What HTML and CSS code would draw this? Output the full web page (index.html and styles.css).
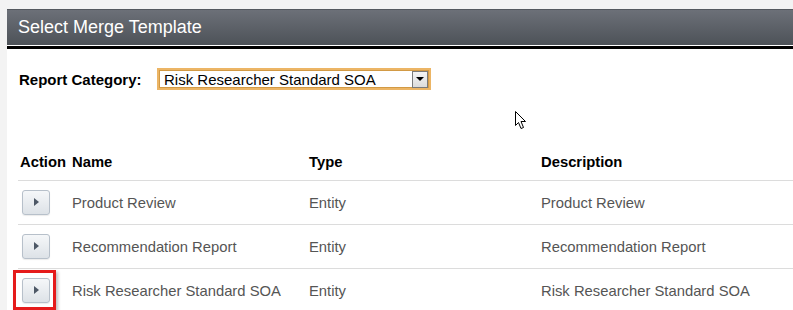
FILE: index.html
```html
<!DOCTYPE html>
<html lang="en">

<head>
    <meta charset="UTF-8">
    <title>Select Merge Template</title>
    <link rel="stylesheet" href="styles.css">
</head>

<body>
    <div class="panel">
        <div class="panel-header">Select Merge Template</div>
        <div class="panel-body">
            <div class="filter-row">
                <label class="filter-label">Report Category:</label>
                <div class="fake-select">
                    <span class="fake-select-text">Risk Researcher Standard SOA</span>
                    <span class="fake-select-btn"><span class="arrow-down"></span></span>
                </div>
            </div>

            <table class="template-table">
                <thead>
                    <tr>
                        <th class="col-action">Action</th>
                        <th class="col-name">Name</th>
                        <th class="col-type">Type</th>
                        <th>Description</th>
                    </tr>
                </thead>
                <tbody>
                    <tr>
                        <td class="col-action"><button class="play-btn"><span class="arrow-right"></span></button></td>
                        <td>Product Review</td>
                        <td>Entity</td>
                        <td>Product Review</td>
                    </tr>
                    <tr>
                        <td class="col-action"><button class="play-btn"><span class="arrow-right"></span></button></td>
                        <td>Recommendation Report</td>
                        <td>Entity</td>
                        <td>Recommendation Report</td>
                    </tr>
                    <tr>
                        <td class="col-action highlight-cell">
                            <button class="play-btn"><span class="arrow-right"></span></button>
                            <span class="red-box"></span>
                        </td>
                        <td>Risk Researcher Standard SOA</td>
                        <td>Entity</td>
                        <td>Risk Researcher Standard SOA</td>
                    </tr>
                </tbody>
            </table>
        </div>

        <!-- mouse pointer from the screenshot -->
        <svg class="cursor" width="13" height="20" viewBox="0 0 13 20">
            <path d="M1.5 1.5 L1.5 15.5 L4.5 12.5 L7 18.5 L9.5 17.5 L7 11.5 L11.5 11.5 Z" fill="#fff" stroke="#000" stroke-width="1" stroke-linejoin="miter"/>
        </svg>
    </div>
</body>

</html>
```

FILE: styles.css
```css
* {
    margin: 0;
    padding: 0;
    box-sizing: border-box;
}

html,
body {
    height: 100%;
}

body {
    background: #f3f3f3;
    padding: 9px 0 0 7px;
    font-family: "Liberation Sans", Arial, sans-serif;
    overflow: hidden;
}

.panel {
    position: relative;
    background: #fff;
    height: 100%;
}

.panel-header {
    height: 36px;
    line-height: 35px;
    padding-left: 11px;
    font-size: 18px;
    color: #fff;
    background: linear-gradient(#6c7078, #4d5258);
    border-top: 1px solid #55595f;
    box-shadow: 0 1px 0 #fff, 0 4px 0 #000;
    margin-bottom: 4px;
}

.panel-body {
    padding: 19px 0 0 11px;
}

.filter-row {
    display: flex;
    align-items: center;
    height: 22px;
}

.filter-label {
    font-size: 15px;
    font-weight: bold;
    color: #000;
    width: 139px;
    padding-left: 1px;
}

.fake-select {
    display: flex;
    align-items: center;
    justify-content: space-between;
    width: 274px;
    height: 22px;
    border: 2px solid #ecb565;
    box-shadow: inset 0 0 0 1px #d29a45;
    background: #fff;
    padding: 0 1px 0 5px;
}

.fake-select-text {
    font-size: 15px;
    color: #000;
}

.fake-select-btn {
    display: flex;
    align-items: center;
    justify-content: center;
    width: 16px;
    height: 17px;
    border: 1px solid #7a7a7a;
    background: linear-gradient(#f4f4f4, #dcdcdc);
}

.arrow-down {
    width: 0;
    height: 0;
    border-left: 4px solid transparent;
    border-right: 4px solid transparent;
    border-top: 4px solid #000;
}

.template-table {
    width: 775px;
    margin-top: 54px;
    border-collapse: collapse;
    font-size: 14.8px;
}

.template-table th {
    height: 36px;
    text-align: left;
    font-weight: bold;
    color: #000;
    padding: 0 0 0 2px;
    border-bottom: 1px solid #dcdcdc;
}

.template-table td {
    height: 44px;
    color: #555;
    padding: 1px 0 0 2px;
    border-bottom: 1px solid #dcdcdc;
}

.template-table th.col-action,
.template-table td.col-action {
    width: 52px;
}

.template-table td.col-action {
    padding: 0 0 0 4px;
}

.col-name {
    width: 237px;
}

.col-type {
    width: 232px;
}

.play-btn {
    display: flex;
    align-items: center;
    justify-content: center;
    width: 28px;
    height: 25px;
    border: 1px solid #b7c0ca;
    border-radius: 3px;
    background: linear-gradient(#f5f7f9, #dde2e7);
    box-shadow: 0 1px 1px rgba(0, 0, 0, 0.08);
    cursor: pointer;
}

.arrow-right {
    width: 0;
    height: 0;
    border-top: 4px solid transparent;
    border-bottom: 4px solid transparent;
    border-left: 5px solid #4d5866;
}

.highlight-cell {
    position: relative;
}

.red-box {
    position: absolute;
    left: -5px;
    top: 1px;
    width: 43px;
    height: 40px;
    border: 3px solid #e51b1b;
    box-shadow: 2px 2px 3px rgba(0, 0, 0, 0.25);
}

.cursor {
    position: absolute;
    left: 507px;
    top: 101px;
}
```
